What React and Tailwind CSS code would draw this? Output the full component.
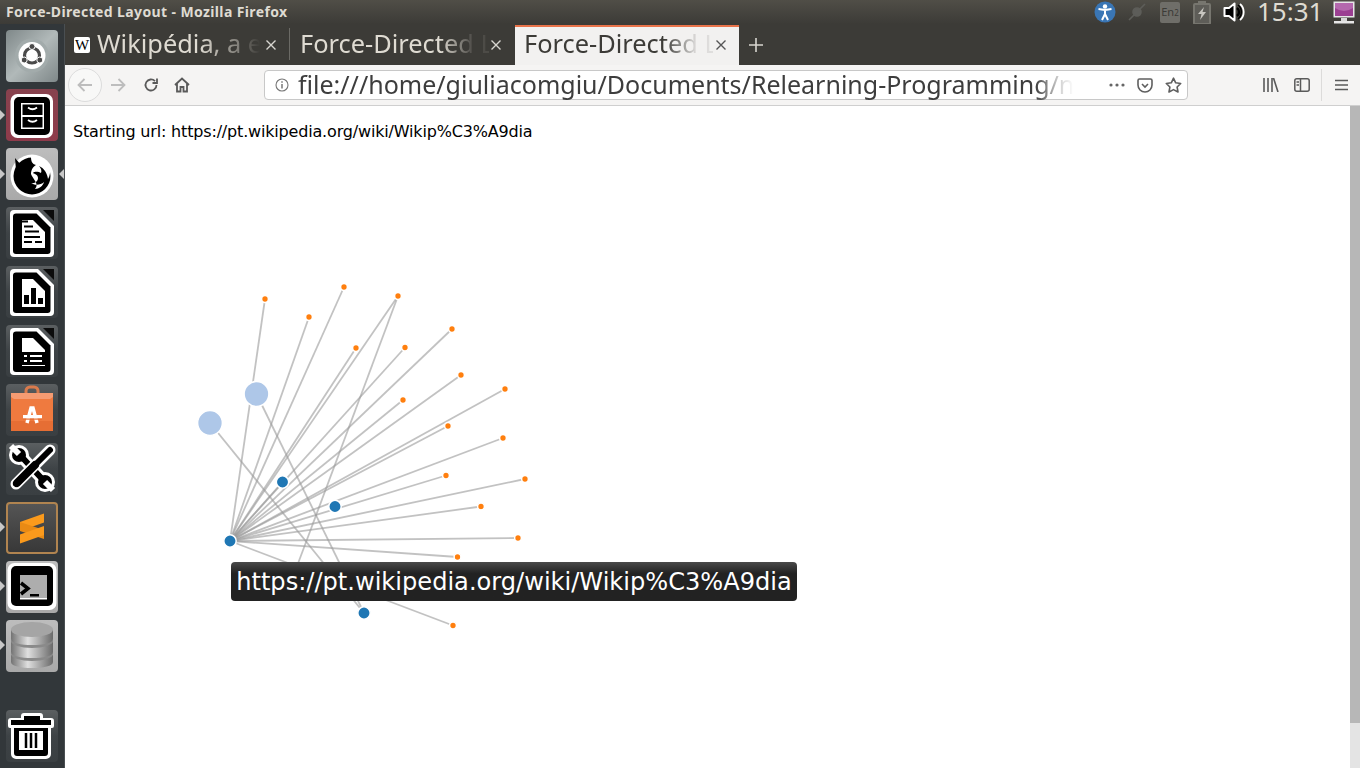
import React from "react";

const HUB = [230, 541];
const ORANGE = [[265,299],[309,317],[344,287],[398,296],[356,348],[405,347.5],[452,329],[461,375],[403,400],[505,389],[448,426],[503,438],[446,475.5],[525,479],[481,506.5],[518,538],[457.5,557],[453,625.5]];
const EXTRA = [
  [[210,423],[364,613]],
  [[256.5,394],[364,613]],
  [[398,296],[290,585]],
  [[230,541],[282.5,482]],
];
const BLUE = [[282.5,482],[335,506.5],[230,541],[364,613]];
const BIG = [[256.5,394],[210,423]];

function Graph() {
  return (
    <svg width="780" height="612" viewBox="65 156 780 612" className="block">
      <g stroke="#999" strokeOpacity="0.6" strokeWidth="1.8">
        {ORANGE.map(([x, y], i) => <line key={i} x1={HUB[0]} y1={HUB[1]} x2={x} y2={y} />)}
        {EXTRA.map(([a, b], i) => <line key={i} x1={a[0]} y1={a[1]} x2={b[0]} y2={b[1]} />)}
      </g>
      <g stroke="#fff" strokeWidth="1.5">
        {ORANGE.map(([x, y], i) => <circle key={i} cx={x} cy={y} r="3.4" fill="#ff7f0e" />)}
        {BLUE.map(([x, y], i) => <circle key={i} cx={x} cy={y} r="6.2" fill="#1f77b4" />)}
        {BIG.map(([x, y], i) => <circle key={i} cx={x} cy={y} r="12.4" fill="#aec7e8" />)}
      </g>
    </svg>
  );
}

const Tile = ({ className, children }) => (
  <div className={`w-[52px] h-[52px] rounded-[4px] shrink-0 overflow-hidden ${className}`}>
    <svg width="52" height="52" viewBox="0 0 52 52" className="block">{children}</svg>
  </div>
);
const DARK = "bg-linear-to-b from-[#5b5f61] via-[#3e4346] to-[#3a3f42]";
const LIGHT = "bg-linear-to-b from-[#bdbdbd] to-[#a9a9a9]";

const DocBase = ({ children }) => (
  <>
    <path d="M8 3H32L48 19V46a4 4 0 0 1-4 4H8a4 4 0 0 1-4-4V7a4 4 0 0 1 4-4Z" fill="#fff" />
    <path d="M10 6.500H30.500L44.500 20.500V44a3 3 0 0 1-3 3H10a3 3 0 0 1-3-3V9.500a3 3 0 0 1 3-3Z" fill="#000" />
    <path d="M37 3H48V14Z" fill="#0c0c0c" />
    <path d="M16 13H27L39 25V41H16Z" fill="#fff" />
    {children}
  </>
);

const launcher = [
  <Tile key="u" className="bg-linear-to-br from-[#7f8889] via-[#b1b9b9] to-[#7f8889]">
    <circle cx="26" cy="25.500" r="17" fill="#a2abab" />
    <circle cx="26" cy="25.500" r="13.500" fill="#fff" />
    <circle cx="26" cy="25.500" r="7.500" fill="none" stroke="#4a4a4a" strokeWidth="3.200" />
    <circle cx="26" cy="16.500" r="3" fill="#4a4a4a" stroke="#fff" />
    <circle cx="18.200" cy="30" r="3" fill="#4a4a4a" stroke="#fff" />
    <circle cx="33.800" cy="30" r="3" fill="#4a4a4a" stroke="#fff" />
  </Tile>,
  <Tile key="f" className="bg-linear-to-b from-[#87424e] to-[#8f3b4b]">
    <rect x="4.500" y="5" width="42.500" height="44" rx="7" fill="#fff" />
    <rect x="8" y="8" width="36" height="38" rx="5" fill="#000" />
    <rect x="15" y="14" width="23" height="26" fill="#fff" />
    <rect x="16.500" y="15.500" width="20" height="10.500" fill="#000" />
    <rect x="16.500" y="28" width="20" height="10.500" fill="#000" />
    <path d="M22 18.500q4.500 3.500 9 0M22 31q4.500 3.500 9 0" stroke="#fff" strokeWidth="1.800" fill="none" />
  </Tile>,
  <Tile key="ff" className={LIGHT}>
    <circle cx="26" cy="28" r="21.500" fill="#fff" />
    <circle cx="26" cy="28" r="18.500" fill="#000" />
    <path d="M25 9c6-3 15 1 18 8 2 6 1 11-1 14-1-6-4-11-9-13 2 2 3 5 2 7-2-1-6-2-8 0 2 1 5 2 5 5s-3 6-7 5c4 3 10 2 13-1-1 4-5 7-9 7 5-5-3-11-4-15 0-5 3-8 5-9-4-1-5-4-5-8Z" fill="#fff" />
    <path d="M9 10l6 7 6-3-3 5-8 3Z" fill="#000" />
  </Tile>,
  <Tile key="w" className={DARK}>
    <DocBase>
      <path d="M16 14.500h6M18 19.500h9M19 24.500h14M18 30h16M18 35h8M29 35h7" stroke="#000" strokeWidth="2.200" />
    </DocBase>
  </Tile>,
  <Tile key="c" className={DARK}>
    <DocBase>
      <rect x="18" y="29" width="5" height="9" fill="#000" />
      <rect x="25" y="22" width="5" height="16" fill="#000" />
      <rect x="32" y="32" width="5" height="6" fill="#000" />
    </DocBase>
  </Tile>,
  <Tile key="b" className={DARK}>
    <DocBase>
      <rect x="16" y="27" width="23" height="13" fill="#000" />
      <path d="M24 31h12M24 36h12M18 31h3M18 36h3" stroke="#fff" strokeWidth="2" />
    </DocBase>
  </Tile>,
  <Tile key="s" className={DARK}>
    <path d="M20 12V7a4 4 0 0 1 4-4h4a4 4 0 0 1 4 4v5" fill="none" stroke="#d97a4c" strokeWidth="3" />
    <path d="M5 9H47V47H5Z" fill="#ef7a3f" />
    <path d="M5 9H47V13L44 15H8L5 13Z" fill="#f59b72" />
    <path d="M5 37H47V47H5Z" fill="#e66e34" />
    <path d="M21 39L25 24h2L31 39" fill="none" stroke="#fff" strokeWidth="3.500" />
    <rect x="17" y="31" width="19" height="3.500" fill="#fff" />
    <rect x="17" y="34.500" width="19" height="1.200" fill="#e66e34" />
  </Tile>,
  <Tile key="t" className={DARK}>
    <g fill="none" strokeLinecap="round">
      <path d="M14 12L38 38" stroke="#fff" strokeWidth="12" />
      <circle cx="13" cy="12" r="10" fill="#fff" />
      <circle cx="39" cy="39" r="10" fill="#fff" />
      <path d="M14 12L38 38" stroke="#000" strokeWidth="6" />
      <circle cx="13" cy="12" r="7" fill="#000" />
      <circle cx="39" cy="39" r="7" fill="#000" />
      <path d="M5 3L13 11" stroke="#fff" strokeWidth="6" strokeLinecap="butt" />
      <path d="M47 47L39 39" stroke="#fff" strokeWidth="6" strokeLinecap="butt" />
      <path d="M44 7L10 41" stroke="#fff" strokeWidth="11" />
      <path d="M44 7L10 41" stroke="#000" strokeWidth="6" />
      <path d="M29 22L11 40" stroke="#000" strokeWidth="8" />
    </g>
  </Tile>,
  <Tile key="sb" className="bg-linear-to-b from-[#555] to-[#383838] border-2 border-[#b08450]">
    <g transform="translate(-2 -2)">
      <path d="M14 20L38 11.500V20.500L14 29Z" fill="#fb9a1c" />
      <path d="M14 20V29L38 37V28Z" fill="#e98a14" />
      <path d="M14 32.500L38 24V33L14 41.500Z" fill="#fb9a1c" />
    </g>
  </Tile>,
  <Tile key="tm" className={LIGHT}>
    <rect x="1.500" y="2" width="49" height="47" rx="7" fill="#fff" />
    <rect x="5" y="5" width="42" height="40" rx="5" fill="#000" />
    <rect x="14" y="14" width="27" height="24" fill="#adadad" />
    <path d="M15 22l7 5.500-7 5.500" fill="none" stroke="#000" strokeWidth="3.500" />
    <rect x="24" y="33" width="9" height="2.500" fill="#000" />
    <rect x="14" y="37" width="27" height="1.500" fill="#fff" />
  </Tile>,
  <Tile key="d" className={LIGHT}>
    <defs>
      <linearGradient id="disk" x1="0" x2="1" y1="0" y2="0">
        <stop offset="0" stopColor="#737373" />
        <stop offset="0.4" stopColor="#dfdfdf" />
        <stop offset="1" stopColor="#6a6a6a" />
      </linearGradient>
    </defs>
    <path d="M5 35v7c0 4 10 6 21 6s21-2 21-6v-7Z" fill="url(#disk)" />
    <ellipse cx="26" cy="34" rx="21" ry="7" fill="#8a8a8a" />
    <path d="M5 21v11c0 4 10 6 21 6s21-2 21-6V21Z" fill="url(#disk)" />
    <ellipse cx="26" cy="21" rx="21" ry="7" fill="#8a8a8a" />
    <path d="M5 10v9c0 4 10 6 21 6s21-2 21-6v-9Z" fill="url(#disk)" />
    <ellipse cx="26" cy="9.500" rx="21" ry="7.500" fill="#a5a5a5" />
  </Tile>,
];

const trash = (
  <Tile key="tr" className={DARK}>
    <path d="M15 8V6a3 3 0 0 1 3-3h16a3 3 0 0 1 3 3v2h8a3 3 0 0 1 3 3v5a2 2 0 0 1-2 2h-1v26a5 5 0 0 1-5 5H10a5 5 0 0 1-5-5V18H4a2 2 0 0 1-2-2v-5a3 3 0 0 1 3-3Z" fill="#fff" />
    <path d="M18 10V6h16v4h11v5H5v-5ZM8 18H42V43a3 3 0 0 1-3 3H11a3 3 0 0 1-3-3Z" fill="#000" />
    <rect x="13" y="21" width="24" height="19" fill="#fff" />
    <path d="M20 23v15M25 23v15M30 23v15" stroke="#000" strokeWidth="2.500" />
  </Tile>
);

const Pip = ({ y, right }) => (
  <div
    className={`absolute w-0 h-0 border-y-[5px] border-y-transparent ${right ? "left-[59px] border-r-[5px] border-r-[#c8c8c8]" : "left-0 border-l-[5px] border-l-[#c8c8c8]"}`}
    style={{ top: y - 29 }}
  />
);

function Launcher() {
  return (
    <div className="relative w-[65px] h-[744px] shrink-0 bg-[#32373a] border-r border-r-[#4a4f52] flex flex-col pl-[6px] pt-[6px]">
      <div className="flex flex-col gap-[7px]">{launcher}</div>
      <div className="flex-1" />
      <div className="pb-[6px]">{trash}</div>
      {[115, 174, 527, 586, 645].map((y) => <Pip key={y} y={y} />)}
      <Pip y={174} right />
    </div>
  );
}

const Close = ({ dark }) => (
  <svg width="10" height="10" viewBox="0 0 10 10" className={`shrink-0 ${dark ? "-mt-[3px]" : "-mt-[1px]"}`}>
    <path d="M0.500 0.500L9.500 9.500M9.500 0.500L0.500 9.500" stroke={dark ? "#555" : "#d8d6d0"} strokeWidth="1.400" />
  </svg>
);

const tabFont = "font-['Noto_Sans',sans-serif] text-[25.4px] leading-[36px] h-[36px] whitespace-nowrap overflow-hidden";
const fade = "[mask-image:linear-gradient(to_right,#000_74%,rgba(0,0,0,0.12)_91%,rgba(0,0,0,0.1)_100%)]";

function TabBar() {
  return (
    <div className="h-[41px] bg-[#3c3b37] flex items-end">
      <div className="w-[225px] h-[40px] flex items-center pl-[9px] relative">
        <div className="w-[16px] h-[16px] rounded-[2px] bg-white flex items-center justify-center shrink-0 font-['Liberation_Serif',serif] text-[15px] text-black leading-none">W</div>
        <div className={`${tabFont} -mt-[5px] ml-[7px] w-[163px] text-[#dfdbd2] [mask-image:linear-gradient(to_right,#000_62%,rgba(0,0,0,0.4)_88%,transparent_100%)]`}>Wikipédia, a enciclopédia</div>
        <div className="ml-[6px] flex"><Close /></div>
        <div className="absolute right-0 top-[3px] h-[32px] w-px bg-[#6b6a65]" />
      </div>
      <div className="w-[225px] h-[40px] flex items-center pl-[10px]">
        <div className={`${tabFont} -mt-[5px] w-[189px] text-[#dfdbd2] ${fade}`}>Force-Directed Layout</div>
        <div className="ml-[2px] flex"><Close /></div>
      </div>
      <div className="w-[224px] h-[40px] flex items-center pl-[9px] bg-[#f2f1f0] border-t-2 border-t-[#e9734a]">
        <div className={`${tabFont} -mt-[7px] w-[189px] text-[#3c3b37] ${fade}`}>Force-Directed Layout</div>
        <div className="ml-[3px] flex"><Close dark /></div>
      </div>
      <div className="h-[40px] flex items-center ml-[10px]">
        <svg width="14" height="14" viewBox="0 0 14 14"><path d="M7 0V14M0 7H14" stroke="#d8d6d0" strokeWidth="1.600" /></svg>
      </div>
    </div>
  );
}

function Toolbar() {
  const ic = { fill: "none", stroke: "#5a5a5a", strokeWidth: 1.800 };
  return (
    <div className="h-[41px] bg-[#f5f4f3] border-b border-b-[#cfcfcf] flex items-center">
      <div className="w-[34px] h-[34px] ml-[3px] rounded-full border border-[#dcdcdc] bg-[#f8f8f7] flex items-center justify-center shrink-0">
        <svg width="16" height="14" viewBox="0 0 16 14" {...ic} stroke="#bdbdbd"><path d="M15 7H2M7.500 1L1.500 7l6 6" /></svg>
      </div>
      <svg width="16" height="14" viewBox="0 0 16 14" {...ic} stroke="#bdbdbd" className="ml-[8px] shrink-0"><path d="M1 7H14M8.500 1l6 6-6 6" /></svg>
      <svg width="16" height="16" viewBox="0 0 16 16" {...ic} className="ml-[17px] shrink-0"><path d="M13.500 8A5.500 5.500 0 1 1 12 4.200" /><path d="M14 1.500V6H9.500" /></svg>
      <svg width="16" height="16" viewBox="0 0 16 16" {...ic} className="ml-[15px] shrink-0"><path d="M1 8l7-6.500L15 8M3 6.500V14.500H6.500V10H9.500V14.500H13V6.500" /></svg>
      <div className="ml-[74px] w-[924px] h-[30px] bg-white border border-[#c8c8c8] rounded-[4px] flex items-center shrink-0">
        <svg width="14" height="14" viewBox="0 0 14 14" className="ml-[10px] shrink-0" fill="none" stroke="#777" strokeWidth="1.100"><circle cx="7" cy="7" r="6" /><path d="M7 6V10.500M7 3.200V4.800" strokeWidth="1.500" /></svg>
        <div className="ml-[9px] w-[776px] h-[30px] overflow-hidden font-['Noto_Sans',sans-serif] text-[25px] leading-[28px] whitespace-nowrap text-[#3d3d3d] [mask-image:linear-gradient(to_right,#000_95%,rgba(0,0,0,0.25)_98%,transparent_100%)]">file:///home/giuliacomgiu/Documents/Relearning-Programming/network</div>
        <svg width="16" height="4" viewBox="0 0 16 4" fill="#666" className="ml-[35px] shrink-0"><circle cx="2" cy="2" r="1.600" /><circle cx="8" cy="2" r="1.600" /><circle cx="14" cy="2" r="1.600" /></svg>
        <svg width="16" height="15" viewBox="0 0 16 15" fill="none" stroke="#5f5f5f" strokeWidth="1.600" className="ml-[12px] shrink-0"><path d="M2.500 1H13.500a1.500 1.500 0 0 1 1.500 1.500V7A7 7 0 0 1 1 7V2.500A1.500 1.500 0 0 1 2.500 1Z" /><path d="M5 6l3 3 3-3" /></svg>
        <svg width="17" height="16" viewBox="0 0 17 16" fill="none" stroke="#5f5f5f" strokeWidth="1.600" className="ml-[12px] shrink-0"><path d="M8.500 1.200l2.200 4.600 5 .7-3.600 3.500.9 5-4.500-2.400L4 15l.9-5L1.300 6.500l5-.7Z" strokeLinejoin="round" /></svg>
      </div>
      <svg width="16" height="14" viewBox="0 0 16 14" fill="none" stroke="#5a5a5a" strokeWidth="1.600" className="ml-[75px] shrink-0"><path d="M1 0V14M5 0V14M9 0V14M10.500 0L15 14" /></svg>
      <svg width="16" height="14" viewBox="0 0 16 14" fill="none" stroke="#5a5a5a" strokeWidth="1.500" className="ml-[15px] shrink-0"><rect x="0.800" y="0.800" width="14.400" height="12.400" rx="2" /><path d="M6.500 1V13M2.500 4H5M2.500 7H5" /></svg>
      <div className="ml-[11px] w-px h-[32px] bg-[#dcdbda] shrink-0" />
      <svg width="13" height="12" viewBox="0 0 13 12" fill="none" stroke="#5a5a5a" strokeWidth="1.700" className="ml-[13px] shrink-0"><path d="M0 1.500H13M0 6H13M0 10.500H13" /></svg>
    </div>
  );
}

function Indicators() {
  return (
    <div className="flex items-center ml-auto">
      <svg width="22" height="22" viewBox="0 0 22 22"><circle cx="11" cy="11" r="10.500" fill="#3a76b5" /><circle cx="11" cy="5.500" r="2.200" fill="#fff" /><path d="M4.500 8L11 9l6.500-1M11 9v4M11 13l-3 6M11 13l3 6" stroke="#fff" strokeWidth="2" fill="none" /></svg>
      <svg width="18" height="18" viewBox="0 0 18 18" className="ml-[12px]" stroke="#5d5d59" strokeWidth="1.600" fill="none"><path d="M1 17l5-5M12 6l5-5" /><circle cx="9" cy="9" r="4" fill="#5d5d59" /></svg>
      <div className="ml-[14px] w-[20px] h-[21px] rounded-[2px] bg-[#6f6e69] text-[#3c3b37] font-['Noto_Sans',sans-serif] text-[11px] leading-[20px] text-center">En<span className="text-[8px]">2</span></div>
      <svg width="18" height="23" viewBox="0 0 18 23" className="ml-[13px]"><rect x="5" y="0" width="8" height="3" fill="#77766f" /><rect x="1" y="3" width="16" height="20" rx="1" fill="#5e5d58" stroke="#77766f" strokeWidth="2" /><path d="M11 6L5 13h3.500L7 19l6-8H9.500Z" fill="#c8c6c0" /></svg>
      <svg width="22" height="20" viewBox="0 0 22 20" className="ml-[12px]"><path d="M1.500 6H6L11.500 1.500V18.500L6 14H1.500Z" fill="#000" stroke="#fff" strokeWidth="2" strokeLinejoin="round" /><path d="M14 6a5 5 0 0 1 0 8" stroke="#000" strokeWidth="2.500" fill="none" /><path d="M15 3a9 9 0 0 1 0 14" stroke="#000" strokeWidth="1.500" fill="none" /><path d="M17 2a10.500 10.500 0 0 1 0 16" stroke="#fff" strokeWidth="1.800" fill="none" /></svg>
      <div className="ml-[12px] w-[66px] h-[24px] font-['Noto_Sans',sans-serif] text-[26px] leading-[22px] text-[#dfdbd2] whitespace-nowrap">15:31</div>
      <svg width="22" height="23" viewBox="0 0 22 23" className="ml-[10px] mr-[5px]"><rect x="0.500" y="0.500" width="21" height="16" fill="#e6e6e6" /><rect x="2" y="2" width="18" height="13" fill="#9b3f92" /><path d="M2 2H20V7Q11 13 2 7Z" fill="#b468ad" /><rect x="8" y="17" width="6" height="3" fill="#d8d8d8" /><rect x="1" y="20" width="20" height="2.500" fill="#e6e6e6" /></svg>
    </div>
  );
}

export default function App() {
  return (
    <div className="w-[1360px] h-[768px] overflow-hidden bg-white flex flex-col">
      <div className="h-[24px] shrink-0 bg-linear-to-b from-[#504e47] to-[#3c3b37] flex items-center pl-[6px]">
        <div className="font-['Noto_Sans',sans-serif] font-bold text-[14px] tracking-[0.38px] leading-none text-[#dfdbd2] whitespace-nowrap">Force-Directed Layout - Mozilla Firefox</div>
        <Indicators />
      </div>
      <div className="flex flex-1 min-h-0">
        <Launcher />
        <div className="flex-1 min-w-0 flex flex-col">
          <TabBar />
          <Toolbar />
          <div className="flex-1 min-h-0 flex">
            <div className="relative flex-1 min-w-0 overflow-hidden">
              <div className="h-[50px] pl-[8px] pt-[16px] font-['DejaVu_Sans',sans-serif] text-[16px] tracking-[-0.175px] leading-[19px] text-black whitespace-nowrap">Starting url: https://pt.wikipedia.org/wiki/Wikip%C3%A9dia</div>
              <Graph />
              <div className="absolute left-[166px] top-[456px] w-[566px] h-[39px] pt-[2px] rounded-[4px] bg-linear-to-b from-[#4a4a4a] via-[#222] to-[#222] via-30% flex items-center justify-center font-['DejaVu_Sans',sans-serif] text-[24.1px] leading-none text-white whitespace-nowrap">https://pt.wikipedia.org/wiki/Wikip%C3%A9dia</div>
            </div>
            <div className="w-[10px] shrink-0 flex flex-col bg-[#e4e4e4]">
              <div className="h-[617px] bg-[#b7b7b7]" />
            </div>
          </div>
        </div>
      </div>
    </div>
  );
}
